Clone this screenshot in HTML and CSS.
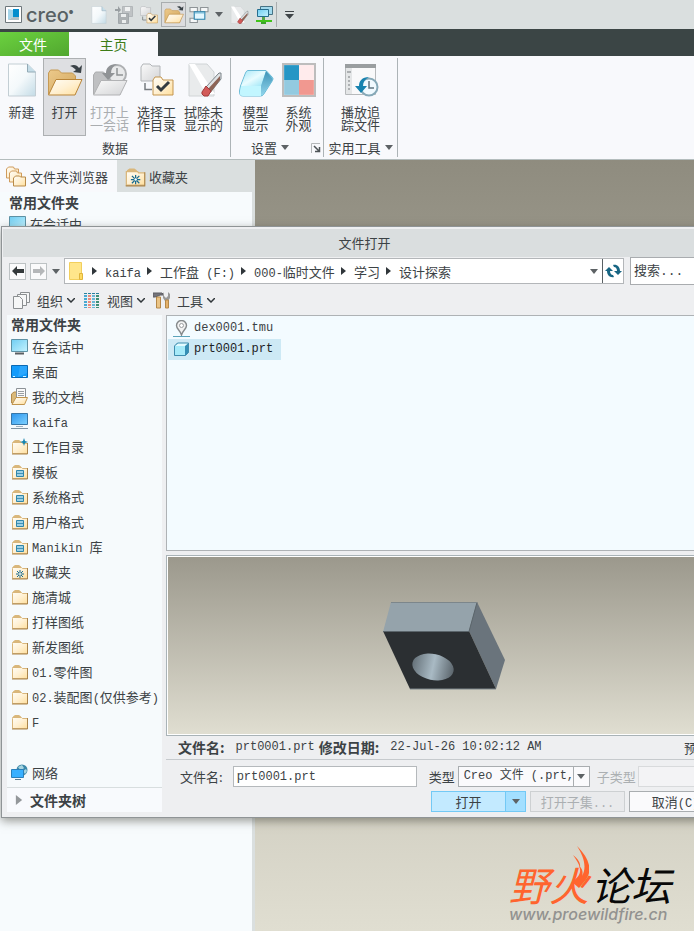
FILE: index.html
```html
<!DOCTYPE html>
<html lang="zh-CN">
<head>
<meta charset="utf-8">
<title>Creo</title>
<link rel="stylesheet" href="styles.css">
</head>
<body>
<svg class="sprite" aria-hidden="true">
  <defs>
    <linearGradient id="g-paper" x1="0" y1="0" x2="1" y2="1"><stop offset="0" stop-color="#fff"/><stop offset=".5" stop-color="#f4f9fb"/><stop offset="1" stop-color="#c3dbe6"/></linearGradient>
    <linearGradient id="g-folder" x1="0" y1="0" x2="1" y2="1"><stop offset="0" stop-color="#fffdf6"/><stop offset=".5" stop-color="#fff0d2"/><stop offset="1" stop-color="#ffdf9c"/></linearGradient>
    <linearGradient id="g-back" x1="0" y1="0" x2="1" y2="1"><stop offset="0" stop-color="#ecc98a"/><stop offset="1" stop-color="#d3a860"/></linearGradient>
    <linearGradient id="g-grey" x1="0" y1="0" x2="1" y2="1"><stop offset="0" stop-color="#fafafa"/><stop offset="1" stop-color="#d3d4d6"/></linearGradient>
    <linearGradient id="g-sky" x1="0" y1="0" x2="1" y2="1"><stop offset="0" stop-color="#6fcdf2"/><stop offset="1" stop-color="#c4f3ff"/></linearGradient>
    <linearGradient id="g-blue" x1="0" y1="0" x2="1" y2="1"><stop offset="0" stop-color="#2b95ee"/><stop offset="1" stop-color="#7fd2ff"/></linearGradient>
    <linearGradient id="g-ice" x1="0" y1="0" x2="1" y2="1"><stop offset="0" stop-color="#a5e6f7"/><stop offset=".5" stop-color="#e9fcff"/><stop offset="1" stop-color="#94e3f6"/></linearGradient>
    <linearGradient id="g-side" x1="0" y1="0" x2="0" y2="1"><stop offset="0" stop-color="#3f94b8"/><stop offset="1" stop-color="#8fd3ea"/></linearGradient>
    <linearGradient id="g-hole" x1="0" y1="0" x2="1" y2="0"><stop offset="0" stop-color="#66727a"/><stop offset=".5" stop-color="#a9bac4"/><stop offset="1" stop-color="#5c666d"/></linearGradient>
  </defs>
  <symbol id="i-doc" viewBox="0 0 28 34"><path d="M.5 1h19l8 8v24H.5z" fill="url(#g-paper)" stroke="#c3ced4"/><path d="M19.500 1v8h8" fill="#c5dde8" stroke="#93aab6"/></symbol>
  <symbol id="i-open" viewBox="0 0 36 34"><path d="M1.500 31V10l2-3h8l3 3h11l3 3v18z" fill="url(#g-back)" stroke="#c69a55"/><path d="M9 16.500h26L28 32H1.500z" fill="url(#g-folder)" stroke="#b98539"/><path d="M23 3c4-2 7-1 9 2l3-3-1 8-8-1 3-2c-2-2-3-3-6-4z" fill="#3a4247"/></symbol>
  <symbol id="i-last" viewBox="0 0 36 34"><path d="M1.500 31V12l2-3h8l3 3h11l3 3v16z" fill="#bfc0c2" stroke="#acadaf"/><circle cx="25" cy="11" r="9" fill="#e8e9ea" stroke="#aeb0b2" stroke-width="2"/><path d="M25 5v7h6" fill="none" stroke="#8f9294" stroke-width="1.500"/><path d="M25 1c-8 0-11 4-11 9h-4l6 7 7-7h-4c0-4 2-7 6-9z" fill="#909396"/><path d="M9 17.500h26L28 32H1.500z" fill="url(#g-grey)" stroke="#b1b2b4"/></symbol>
  <symbol id="i-selectdir" viewBox="0 0 34 34"><path d="M1 4l2-3h7l2 2h8v15H1z" fill="url(#g-grey)" stroke="#b2b5b8"/><path d="M5 20v6.500h7" fill="none" stroke="#777c80" stroke-width="1.500"/><path d="M13 32V17l2-3h6l2 3h10v15z" fill="url(#g-folder)" stroke="#c3954f"/><path d="M17 23l4 4 8-8" fill="none" stroke="#333b40" stroke-width="3"/></symbol>
  <symbol id="i-erase" viewBox="0 0 34 34"><path d="M2 1h18l7 8v24H2z" fill="#e9ebec" stroke="#d0d4d6"/><path d="M2 1l17 30h9L8 1z" fill="#fff"/><path d="M19 24L32 10l2 0v6L22 31z" fill="#dfe3e5" stroke="#7b8388"/><path d="M21 26l12-13v4L24 29z" fill="#8d6456"/><path d="M15 29l4-6 5 5-3 5h-4q-3-2-2-4z" fill="#d25a58" stroke="#a03b3b"/></symbol>
  <symbol id="i-model" viewBox="0 0 36 34"><path d="M10 7.500h18l6.500 7q1 1 0 3l-9 14q-1 1.500-3 1.500H5q-4 0-3.500-5l1-5 5-13q1-2.500 2.500-2.500z" fill="#8fdcf1" stroke="#69b9d5"/><path d="M10 8h18L23 23H3L8 10q1-2 2-2z" fill="url(#g-ice)"/><path d="M3 23h20v10H5q-4 0-3-5z" fill="#c2f6ff"/><path d="M28 8l6 7q1 1 0 3l-9 13-2 1v-9z" fill="url(#g-side)"/></symbol>
  <symbol id="i-appearance" viewBox="0 0 32 32"><path d="M1 1h30v30H1z" fill="#fff" stroke="#bdbdbd" stroke-width="2"/><path d="M2 2h14v14H2z" fill="#2596c5"/><path d="M16 2h14v14H16z" fill="#ffebec"/><path d="M2 16h14v14H2z" fill="#93cae0"/><path d="M16 16h14v14H16z" fill="#f19890"/></symbol>
  <symbol id="i-trail" viewBox="0 0 34 34"><path d="M1.500 1.500h30v30h-30z" fill="#f9f9fa" stroke="#b7babc"/><path d="M1 1h31v4H1z" fill="#9a9ea0"/><path d="M2 5h6v26H2z" fill="#e4e6e7"/><path d="M3 9h4M4 14h2M4 18h2M4 22h2M4 26h2" stroke="#777b7e"/><circle cx="25" cy="24" r="8.500" fill="#f1faff" stroke="#86a9b8" stroke-width="2"/><path d="M25 18v7h5" fill="none" stroke="#607681" stroke-width="1.500"/><path d="M25 14c-7 0-10 4-10 9h-4l6 7 6-7h-4c0-4 2-7 6-9z" fill="#1883af"/></symbol>
  <symbol id="i-folder" viewBox="0 0 17 17"><path d="M2 5V3.500L4 2h4l2 1.500V5z" fill="#d9b77b"/><path d="M1.500 5.500V4.500h9l1 1h5v10h-15z" fill="url(#g-folder)" stroke="#d9b67a"/><path d="M1 16h15.500V5" fill="none" stroke="#a9834a"/></symbol>
  <symbol id="i-folders" viewBox="0 0 21 21"><path d="M1 3l2-2h5l1 2h4v9H1z" fill="url(#g-folder)" stroke="#cf9b5c"/><path d="M4 7l2-2h5l1 2h4v9H4z" fill="url(#g-folder)" stroke="#cf9b5c"/><path d="M8 12l2-2h4l1 1h5v9H8z" fill="url(#g-folder)" stroke="#b98b48"/></symbol>
  <symbol id="i-star" viewBox="0 0 8 8"><path d="M4 0v8M0 4h8M1 1l6 6M7 1L1 7" stroke="#176b90"/><circle cx="4" cy="4" r="1" fill="#fff"/></symbol>
  <symbol id="i-template" viewBox="0 0 17 17"><use href="#i-folder"/><path d="M5.500 7.500h7v6h-7z" fill="#9ccfe4" stroke="#2f86ab"/><path d="M6 10.500h6" stroke="#4394b8"/></symbol>
  <symbol id="i-fav" viewBox="0 0 17 17"><use href="#i-folder"/><use href="#i-star" x="5" y="7" width="8" height="8"/></symbol>
  <symbol id="i-session" viewBox="0 0 17 17"><path d="M.5 1.500h16v12H.5z" fill="url(#g-sky)" stroke="#5e92a5"/><path d="M4 15.500h9" stroke="#5a5f62" stroke-width="2"/></symbol>
  <symbol id="i-desktop" viewBox="0 0 17 17"><path d="M.5 2.500h16v12H.5z" fill="#129bfb" stroke="#0a69b3"/><path d="M9 3h7v7l-9 4z" fill="#43b4ff" opacity=".5"/><path d="M2 13.500h2m8 0h3" stroke="#d9f6ff"/></symbol>
  <symbol id="i-docs" viewBox="0 0 17 17"><path d="M.5 15V6L3 4h3l1 2h5v9z" fill="#dab979" stroke="#b28b4d"/><path d="M5.500.5h9v10h-9z" fill="#fafafa" stroke="#8c9297"/><path d="M7 3.500h6M7 5.500h6M7 7.500h6" stroke="#9a9fa3"/><path d="M5 9.500h11.500l-3 7H1z" fill="url(#g-folder)" stroke="#c0954f"/></symbol>
  <symbol id="i-pc" viewBox="0 0 17 17"><path d="M.5.500h16v11H.5z" fill="url(#g-blue)" stroke="#3877a8"/><path d="M5 13.500h7" stroke="#9fb1be"/><path d="M0 15.500h17" stroke="#7f93a3"/></symbol>
  <symbol id="i-work" viewBox="0 0 17 17"><use href="#i-folder"/><path d="M13 0l1 3 3 1-3 1-1 3-1-3-3-1 3-1z" fill="#1684ae"/></symbol>
  <symbol id="i-net" viewBox="0 0 17 17"><circle cx="11" cy="6" r="5.500" fill="#3c88a9"/><path d="M7 3l4-2 2 3-3 3zM12 7l3-2 1 2-2 3z" fill="#a7d4df"/><path d="M.5 5.500h12v8H.5z" fill="#38b0ff" stroke="#2a80ba"/><path d="M4 15.500h6" stroke="#5a7d92"/></symbol>
  <symbol id="i-pages" viewBox="0 0 18 17"><g fill="#f6f7f7" stroke="#8b8f91"><path d="M7.500.500h9v10h-9z"/><path d="M4.500 2.500h9v11h-9z"/><path d="M.5 4.500h6l3 3v9h-9z"/></g></symbol>
  <symbol id="i-grid" viewBox="0 0 18 17"><path d="M1 1.500h3M5 1.500h3M9 1.500h3M13 1.500h3" stroke="#27809c"/><g stroke-width="3" stroke-dasharray="2 1"><path d="M2.500 3v13" stroke="#49a9d2"/><path d="M6.500 3v13" stroke="#e98b7b"/><path d="M10.500 3v13" stroke="#6bb6d6"/><path d="M14.500 3v13" stroke="#3e8f75"/></g></symbol>
  <symbol id="i-tools" viewBox="0 0 18 17"><path d="M0 5V1h9l2 2H7L5 4 2 5z" fill="#74747b" stroke="#5c5c62"/><path d="M3.500 5h4v11h-4z" fill="#ebc485" stroke="#b58848"/><path d="M11 0v4l2 2 2-2V0l2 2v4l-2 3h-3l-2-3V2z" fill="#999"/><path d="M12.500 8h3v8h-3z" fill="#e4b16a" stroke="#b58848"/></symbol>
  <symbol id="i-down" viewBox="0 0 8 5"><path d="M0 0h8L4 5z" fill="#5d6265"/></symbol>
  <symbol id="i-right" viewBox="0 0 5 8"><path d="M0 0l5 4-5 4z" fill="#30363a"/></symbol>
  <symbol id="i-chev" viewBox="0 0 8 5"><path d="M0 0l4 4 4-4" fill="none" stroke="#30363a" stroke-width="1.500"/></symbol>
  <symbol id="i-back" viewBox="0 0 12 10"><path d="M0 5l5-5v3h7v4H5v3z" fill="currentColor"/></symbol>
  <symbol id="i-yellow" viewBox="0 0 14 18"><path d="M.5.500h12v17H.5z" fill="#ffe68b" stroke="#f2cf5c"/><path d="M10.500 11.500h3v6h-3z" fill="#ffdb61" stroke="#e0b53c"/></symbol>
  <symbol id="i-refresh" viewBox="0 0 17 14"><path d="M4 3L0 7h2c0 4 3 7 7 6l-1-2c-2 0-3-2-3-4h3zM13 11l4-4h-2c0-4-3-7-7-6l1 2c2 0 3 2 3 4H9z" fill="#176583"/></symbol>
  <symbol id="i-pin" viewBox="0 0 17 17"><path d="M8.500 15C7 10 3.500 9 3.500 5.500a5 5 0 0 1 10 0c0 3.500-3.500 4.500-5 9.500z" fill="#f1f1f1" stroke="#85898b" stroke-width="1.400"/><circle cx="8.500" cy="5.500" r="2" fill="#fff" stroke="#9b9fa1"/><path d="M0 16.500h17" stroke="#5ba3ba"/></symbol>
  <symbol id="i-part" viewBox="0 0 17 17"><path d="M1.500 5l3-3h11v9.500l-3 3h-11z" fill="#348eb5" stroke="#3f8dae"/><path d="M2 5l3-2.500h10L12 5z" fill="#e3fbff"/><path d="M2 5h10v9H2z" fill="#a6eaf9"/></symbol>
  <symbol id="i-creo" viewBox="0 0 17 17"><path d="M.5.500h16v16H.5z" fill="#fff" stroke="#6d777b"/><path d="M3 3l5 1v7l-5 3z" fill="#a5d5e9"/><path d="M8 3h6v8H8z" fill="#048dcd"/><path d="M3 14l5-3h6v3z" fill="#b1bfc5"/></symbol>
  <symbol id="i-save" viewBox="0 0 18 18"><path d="M7.500.500h10v10h-10z" fill="#bfc3c5" stroke="#b2b7b9"/><path d="M10 1h5v4h-5z" fill="#f0f2f2"/><path d="M3.500 7.500h10v10h-10z" fill="#acb1b3" stroke="#a1a7aa"/><path d="M6 8h5v3H6zM7 14h4v3H7z" fill="#ebeeee"/><path d="M0 3h3V0l3 4-3 3V5H0z" fill="#999fa2"/></symbol>
  <symbol id="i-windows" viewBox="0 0 18 17"><path d="M.5 1.500h7v4h-7zM10.500 1.500h7v4h-7zM.5 11.500h7v4h-7z" fill="#f5f7f7" stroke="#8e9497"/><path d="M4.500 5.500h10v7h-10z" fill="#e3f7ff" stroke="#2580ac"/><path d="M5 6.500h9" stroke="#62aece"/></symbol>
  <symbol id="i-monitor" viewBox="0 0 18 18"><path d="M5.500.500h12v8h-12z" fill="#a1d9ed" stroke="#477385"/><path d="M2.500 3.500h11v7h-11z" fill="url(#g-sky)" stroke="#256d8e"/><path d="M7 11h3v4H7z" fill="#58a64b"/><path d="M1 15h16" stroke="#41c31b" stroke-width="2"/><path d="M6 17h5" stroke="#3aa52a" stroke-width="2"/></symbol>
  <symbol id="i-launch" viewBox="0 0 10 10"><path d="M.5 10V.500H9" fill="none" stroke="#b5b8ba"/><path d="M3 3l5 5M8.500 4v4.500H4" fill="none" stroke="#4e5457" stroke-width="1.500"/></symbol>
  <symbol id="i-more" viewBox="0 0 9 8"><path d="M0 .500h9M0 3h9L4.500 8z" fill="#3f4548" stroke="none"/><path d="M0 .500h9" stroke="#3f4548"/></symbol>
</svg>

<div class="app">
  <header class="titlebar">
    <svg class="logo"><use href="#i-creo"/></svg><span class="brand">creo<sup>●</sup></span>
    <nav class="quick" aria-label="快速访问">
      <button aria-label="新建"><svg><use href="#i-doc"/></svg></button>
      <button aria-label="保存"><svg><use href="#i-save"/></svg></button>
      <button aria-label="选择工作目录"><svg><use href="#i-selectdir"/></svg></button>
      <button aria-label="打开" class="on"><svg><use href="#i-open"/></svg></button>
      <button aria-label="窗口"><svg><use href="#i-windows"/></svg></button>
      <button aria-label="窗口列表" class="thin"><svg class="down"><use href="#i-down"/></svg></button>
      <button aria-label="拭除"><svg><use href="#i-erase"/></svg></button>
      <button aria-label="显示"><svg><use href="#i-monitor"/></svg></button>
      <button aria-label="自定义" class="more"><svg><use href="#i-more"/></svg></button>
    </nav>
  </header>

  <nav class="tabs"><button class="file-tab">文件</button><button class="home-tab">主页</button></nav>

  <section class="ribbon">
    <div class="group">
      <div class="tools">
        <button class="tool"><svg><use href="#i-doc"/></svg>新建</button>
        <button class="tool active"><svg><use href="#i-open"/></svg>打开</button>
        <button class="tool" disabled><svg><use href="#i-last"/></svg>打开上<br>一会话</button>
        <button class="tool"><svg><use href="#i-selectdir"/></svg>选择工<br>作目录</button>
        <button class="tool"><svg><use href="#i-erase"/></svg>拭除未<br>显示的</button>
      </div>
      <div class="caption">数据</div>
    </div>
    <div class="group">
      <div class="tools">
        <button class="tool"><svg><use href="#i-model"/></svg>模型<br>显示</button>
        <button class="tool"><svg><use href="#i-appearance"/></svg>系统<br>外观</button>
      </div>
      <div class="caption with-launch"><button>设置<svg class="down"><use href="#i-down"/></svg></button><button class="launch" aria-label="设置对话框"><svg><use href="#i-launch"/></svg></button></div>
    </div>
    <div class="group">
      <div class="tools"><button class="tool"><svg><use href="#i-trail"/></svg>播放追<br>踪文件</button></div>
      <div class="caption"><button>实用工具<svg class="down"><use href="#i-down"/></svg></button></div>
    </div>
  </section>

  <main class="work">
    <aside class="browser">
      <div class="browser-tabs">
        <button class="current"><svg><use href="#i-folders"/></svg>文件夹浏览器</button>
        <button class="fav"><svg><use href="#i-fav"/></svg>收藏夹</button>
      </div>
      <h2>常用文件夹</h2>
      <a class="place" href="#"><svg><use href="#i-session"/></svg><span>在会话中</span></a>
    </aside>
    <div class="canvas">
      <div class="watermark">
        <div class="mark"><span class="fire">野火<svg class="flame" viewBox="0 0 17 42"><path d="M5 0c13 13 16 25 8 35L7 42 0 36c7-5 10-10 7-16 4 3 4 7 3 10 5-9 2-19-5-30z" fill="#ff642e"/><path d="M1 9c5 4 8 8 7 13-1-4-4-9-7-13z" fill="#ff642e"/></svg></span><span>论坛</span></div>
        <div class="url">www.proewildfire.cn</div>
      </div>
    </div>
  </main>

  <section class="dialog" role="dialog" aria-labelledby="dlg-title">
    <h1 id="dlg-title">文件打开</h1>
    <div class="nav">
      <button class="step" aria-label="后退"><svg><use href="#i-back"/></svg></button>
      <button class="step off" aria-label="前进"><svg class="flip"><use href="#i-back"/></svg></button>
      <button class="hist" aria-label="历史"><svg class="down"><use href="#i-down"/></svg></button>
      <div class="path">
        <svg class="yellow"><use href="#i-yellow"/></svg>
        <svg class="right"><use href="#i-right"/></svg><a href="#"><span class="lat">kaifa</span></a>
        <svg class="right"><use href="#i-right"/></svg><a href="#">工作盘<span class="lat"> (F:)</span></a>
        <svg class="right"><use href="#i-right"/></svg><a href="#"><span class="lat">000-</span>临时文件</a>
        <svg class="right"><use href="#i-right"/></svg><a href="#">学习</a>
        <svg class="right"><use href="#i-right"/></svg><a href="#">设计探索</a>
        <button class="path-drop" aria-label="路径列表"><svg class="down"><use href="#i-down"/></svg></button>
        <button class="refresh" aria-label="刷新"><svg><use href="#i-refresh"/></svg></button>
      </div>
      <input class="search" type="text" aria-label="搜索" placeholder="搜索...">
    </div>
    <div class="toolbar">
      <button><svg class="ti"><use href="#i-pages"/></svg>组织<svg class="down"><use href="#i-chev"/></svg></button>
      <button><svg class="ti"><use href="#i-grid"/></svg>视图<svg class="down"><use href="#i-chev"/></svg></button>
      <button><svg class="ti"><use href="#i-tools"/></svg>工具<svg class="down"><use href="#i-chev"/></svg></button>
    </div>
    <div class="columns">
      <aside class="places">
        <h2>常用文件夹</h2>
        <a class="place" href="#"><svg><use href="#i-session"/></svg><span>在会话中</span></a>
        <a class="place" href="#"><svg><use href="#i-desktop"/></svg><span>桌面</span></a>
        <a class="place" href="#"><svg><use href="#i-docs"/></svg><span>我的文档</span></a>
        <a class="place" href="#"><svg><use href="#i-pc"/></svg><span><span class="lat">kaifa</span></span></a>
        <a class="place" href="#"><svg><use href="#i-work"/></svg><span>工作目录</span></a>
        <a class="place" href="#"><svg><use href="#i-template"/></svg><span>模板</span></a>
        <a class="place" href="#"><svg><use href="#i-template"/></svg><span>系统格式</span></a>
        <a class="place" href="#"><svg><use href="#i-template"/></svg><span>用户格式</span></a>
        <a class="place" href="#"><svg><use href="#i-template"/></svg><span><span class="lat">Manikin </span>库</span></a>
        <a class="place" href="#"><svg><use href="#i-fav"/></svg><span>收藏夹</span></a>
        <a class="place" href="#"><svg><use href="#i-folder"/></svg><span>施清城</span></a>
        <a class="place" href="#"><svg><use href="#i-folder"/></svg><span>打样图纸</span></a>
        <a class="place" href="#"><svg><use href="#i-folder"/></svg><span>新发图纸</span></a>
        <a class="place" href="#"><svg><use href="#i-folder"/></svg><span><span class="lat">01.</span>零件图</span></a>
        <a class="place" href="#"><svg><use href="#i-folder"/></svg><span><span class="lat">02.</span>装配图<span class="lat">(</span>仅供参考<span class="lat">)</span></span></a>
        <a class="place" href="#"><svg><use href="#i-folder"/></svg><span><span class="lat">F</span></span></a>
        <a class="place network" href="#"><svg><use href="#i-net"/></svg><span>网络</span></a>
        <button class="tree"><svg><use href="#i-right"/></svg>文件夹树</button>
      </aside>
      <div class="content">
        <div class="files">
          <button class="file"><svg><use href="#i-pin"/></svg>dex0001.tmu</button>
          <button class="file selected"><svg><use href="#i-part"/></svg>prt0001.prt</button>
        </div>
        <div class="preview">
          <svg class="solid" viewBox="0 0 122 88" role="img" aria-label="prt0001"><path d="M8 0h86l-8 30H0z" fill="#95a3ab"/><path d="M94 0l28 58-9 29-27-58z" fill="#6a747c"/><path d="M0 29h86l27 58H27z" fill="#2b2f32"/><path d="M0 29.500h86l8-29" fill="none" stroke="#5b656b"/><path d="M8 .500h86M27 87h86" stroke="#7c868b"/><ellipse cx="50" cy="65" rx="21" ry="13" fill="url(#g-hole)" transform="rotate(12 50 65)"/></svg>
        </div>
        <div class="info"><b>文件名:</b><span class="value">prt0001.prt</span><b>修改日期:</b><span class="value">22-Jul-26 10:02:12 AM</span><button class="prev">预览</button></div>
        <form class="form">
          <div class="row">
            <label for="fname">文件名:</label><input id="fname" type="text" value="prt0001.prt">
            <label for="ftype">类型</label>
            <span class="select"><select id="ftype"><option>Creo 文件 (.prt, .asm)</option></select><span class="cap"><svg class="down"><use href="#i-down"/></svg></span></span>
            <label class="dim" for="fsub">子类型</label><select id="fsub" class="sub" disabled><option></option></select>
          </div>
          <div class="row actions">
            <div class="split"><button type="button">打开</button><button type="button" class="arrow" aria-label="打开选项"><svg class="down"><use href="#i-down"/></svg></button></div>
            <button type="button" class="subset" disabled>打开子集<span class="lat">...</span></button>
            <button type="button" class="cancel">取消<span class="lat">(C)</span></button>
          </div>
        </form>
      </div>
    </div>
  </section>
</div>
</body>
</html>
```
FILE: styles.css
```css
* { box-sizing: border-box; }

html, body { margin: 0; }

body {
  font: 13px/13px "Noto Sans CJK SC", sans-serif;
  color: #3c4245;
  overflow: hidden;
}

button {
  font: inherit;
  color: inherit;
  border: 0;
  padding: 0;
  background: none;
}

a { color: inherit; text-decoration: none; }
svg { display: block; flex: none; }
h1, h2 { margin: 0; font-weight: normal; }
h2, b { font-size: 14px; font-weight: bold; }

.sprite { position: absolute; width: 0; height: 0; }

/* Latin runs sit on the baseline of the Chinese text without growing its line */
.lat { font: 12px/0 "Liberation Mono", monospace; white-space: pre; }
.down { width: 8px; height: 5px; }

.app {
  position: relative;
  min-height: 100vh;
  display: flex;
  flex-direction: column;
  overflow: hidden;
}

/* Title bar */
.titlebar {
  display: flex;
  align-items: center;
  height: 29px;
  padding-left: 5px;
  background: #dadfdf;
}
.logo { width: 17px; height: 17px; }
.brand {
  width: 64px;
  padding-left: 4px;
  font: 500 20px/24px Inter, sans-serif;
  color: #586164;
}
.brand sup { font-size: 5px; line-height: 5px; vertical-align: 8px; }
.quick { display: flex; align-items: center; }
.quick button {
  display: grid;
  place-items: center;
  width: 25px;
  height: 25px;
}
.quick svg { width: 20px; height: 18px; }
.quick .down { width: 8px; height: 5px; }
.quick .on { border: 1px solid #a9adaf; background: #dcdddf; }
.quick .on svg { width: 20px; height: 19px; }
.quick .thin { width: 15px; }
.quick .more { border-left: 1px solid #a9adaf; }
.quick .more svg { width: 9px; height: 8px; }

/* Ribbon tabs */
.tabs {
  display: flex;
  height: 27px;
  padding-top: 3px;
  background: #3b4545;
  font-size: 14px;
}
.file-tab { width: 69px; padding-right: 3px; color: #fff; background: linear-gradient(160deg, #6bd13f, #51a72f); }
.home-tab { width: 89px; color: #3d7c17; background: #f8f9fc; }

/* Ribbon */
.ribbon {
  display: flex;
  height: 104px;
  padding-top: 2px;
  background: #f8f9fc;
  border-bottom: 1px solid #b4bdbd;
}
.group {
  display: flex;
  flex-direction: column;
  height: 99px;
  border-right: 1px solid #adb4b7;
}
.group:nth-child(1) { width: 231px; }
.group:nth-child(2) { width: 93px; }
.group:nth-child(3) { width: 74px; }
.tools { display: flex; justify-content: center; }
.group:first-child .tools { justify-content: flex-start; }
.tool {
  display: flex;
  flex-direction: column;
  align-items: center;
  width: 43px;
  height: 78px;
  padding-top: 5px;
}
.group:first-child .tool { width: 47px; }
.group:first-child .tool:first-child,
.group:first-child .tool.active { width: 43px; }
.tool svg { width: 36px; height: 34px; margin-bottom: 8px; }
.tool:disabled { color: #aaadb0; }
.tool.active {
  padding-top: 4px;
  border: 1px solid #adb0b2;
  background: #dedfe2;
}
.caption { padding-top: 5px; text-align: center; }
.caption button { display: inline-flex; align-items: center; gap: 4px; }
.with-launch {
  display: grid;
  grid-template-columns: 1fr 14px;
  justify-items: center;
  align-items: center;
}
.launch svg { width: 10px; height: 10px; }

/* Workspace */
.work { flex: 1; display: flex; }
.browser {
  width: 255px;
  background: #f7fbfd;
  border-right: 3px solid #dadfdf;
}
.browser-tabs { display: flex; height: 32px; margin-bottom: 3px; }
.browser-tabs button { display: flex; align-items: center; text-align: left; }
.browser-tabs .current { width: 117px; padding-left: 5px; gap: 3px; background: #f8f9fc; }
.browser-tabs .fav { flex: 1; padding-left: 7px; gap: 3px; background: #dadfdf; }
.browser-tabs svg { width: 22px; height: 21px; }
.browser h2 { padding: 0 9px; line-height: 14px; margin-bottom: 2px; }
.browser .place { padding-left: 9px; }

.canvas {
  flex: 1;
  display: flex;
  align-items: flex-end;
  justify-content: flex-end;
  padding: 0 20px 8px 0;
  background: linear-gradient(#8f8c7f, #e0ded1);
}
.watermark { width: 165px; }
.mark {
  display: flex;
  gap: 2px;
  font-size: 40px;
  line-height: 42px;
  font-weight: 400;
  font-style: italic;
  color: #080808;
}
.fire { position: relative; color: #ff642e; }
.flame { position: absolute; width: 17px; height: 42px; right: 0; top: -17px; }
.url { font: italic 500 16px/18px Inter, sans-serif; color: #929290; }

/* File dialog */
.dialog {
  position: absolute;
  top: 226px;
  left: 1px;
  right: -34px;
  padding: 2px 5px 5px;
  border: 1px solid #8f9496;
  background: #eeeff1;
  box-shadow: 0 3px 9px rgba(60, 60, 50, .5);
}
.dialog h1 {
  margin: 0 -4px;
  font-size: 13px;
  line-height: 28px;
  text-align: center;
  background: #dadedf;
}
.nav { display: flex; align-items: center; height: 28px; padding-left: 2px; }
.step {
  display: grid;
  place-items: center;
  width: 17px;
  height: 17px;
  margin-right: 4px;
  border: 1px solid #bdc2c4;
  background: #fafafb;
  color: #34393b;
}
.step svg { width: 12px; height: 10px; }
.step.off { color: #b5b7b9; }
.flip { transform: scaleX(-1); }
.hist { padding: 6px 4px 6px 1px; }
.path {
  flex: 1;
  display: flex;
  align-items: center;
  height: 26px;
  padding-left: 4px;
  border: 1px solid #b3b6b9;
  background: #fff;
}
.path a { margin-right: 6px; white-space: nowrap; }
.right { width: 5px; height: 8px; margin-right: 8px; }
.yellow { width: 14px; height: 18px; margin-right: 9px; }
.path-drop { margin-left: auto; padding: 6px 4px; }
.refresh {
  display: grid;
  place-items: center;
  width: 21px;
  height: 24px;
  border-left: 1px solid #596064;
}
.refresh svg { width: 17px; height: 14px; }
.search {
  width: 92px;
  height: 28px;
  margin-left: 6px;
  padding: 0 3px;
  border: 1px solid #a9acaf;
  font: 13px "Liberation Mono", "Noto Sans CJK SC", monospace;
  background: #fff;
}
.search::placeholder { color: #3c4245; opacity: 1; }

.toolbar { display: flex; gap: 8px; height: 30px; padding-left: 6px; }
.toolbar button { display: flex; align-items: center; }
.ti { width: 18px; height: 17px; margin-right: 6px; }
.toolbar .down { margin-left: 4px; }

.columns { display: flex; gap: 4px; }
.places {
  display: flex;
  flex-direction: column;
  width: 155px;
  background: #f6fafc;
}
.places h2 { padding: 2px 4px; line-height: 15px; }
.place {
  display: flex;
  align-items: center;
  height: 25px;
  padding-left: 4px;
  white-space: nowrap;
}
.place svg { width: 17px; height: 17px; margin-right: 4px; }
.network { margin-top: 26px; margin-bottom: 2px; }
.tree {
  display: flex;
  align-items: center;
  flex: 1;
  padding-left: 8px;
  border-top: 1px solid #d8dedf;
  background: #f8fafd;
  font-size: 14px;
  font-weight: bold;
}
.tree svg { width: 8px; height: 10px; margin-right: 7px; opacity: .5; }

.content { flex: 1; min-width: 0; }
.files {
  height: 236px;
  padding: 2px 1px;
  border: 1px solid #aeb2b5;
  background: #f3fbff;
}
.file {
  display: flex;
  align-items: center;
  width: 113px;
  height: 21px;
  padding-left: 5px;
  font: 12px/13px "Liberation Mono", monospace;
}
.file svg { width: 17px; height: 17px; margin-right: 4px; }
.file.selected { background: #cde9f5; color: #1c2225; }
.preview {
  display: grid;
  place-items: center;
  height: 181px;
  margin-top: 4px;
  border: 1px solid #a9b3b7;
  outline: 1px solid #fff;
  outline-offset: -2px;
  background: linear-gradient(#9b988c, #e0ded1);
}
.solid { width: 122px; height: 88px; }
.info {
  display: flex;
  align-items: center;
  height: 24px;
  padding-left: 12px;
  border-bottom: 1px solid #c6cacd;
  white-space: nowrap;
}
.value { margin: 0 4px 0 11px; font: 12px/13px "Liberation Mono", monospace; }
.prev { margin-left: auto; margin-right: 12px; }

.form { padding: 6px 0 0 14px; }
.row { display: flex; align-items: center; height: 21px; }
.row input {
  width: 184px;
  height: 21px;
  margin: 0 12px 0 10px;
  padding: 0 3px;
  border: 1px solid #b5b9bc;
  background: #fff;
  color: #3c4245;
  font: 12px/13px "Liberation Mono", monospace;
}
.select {
  display: flex;
  width: 132px;
  height: 21px;
  margin: 0 7px 0 3px;
  border: 1px solid #a9adb0;
  background: #fafafc;
}
select {
  appearance: none;
  border: 0;
  border-radius: 0;
  background: none;
  color: #3c4245;
  font: 12px/19px "Liberation Mono", "Noto Sans CJK SC", monospace;
}
.select select { flex: 1; min-width: 0; padding: 0 0 0 5px; }
.cap {
  display: grid;
  place-items: center;
  width: 16px;
  border-left: 1px solid #a9adb0;
  pointer-events: none;
}
.dim { color: #abafb2; white-space: nowrap; }
.sub { flex: 1; min-width: 0; height: 21px; margin-left: 2px; border: 1px solid #cfd2d4; background: #f6f6f8; }

.actions { justify-content: flex-end; gap: 4px; margin-top: 4px; }
.split { display: flex; width: 95px; height: 21px; border: 1px solid #73c9f5; background: #c3eaff; }
.split button { flex: 1; }
.split .arrow {
  display: grid;
  place-items: center;
  flex: none;
  width: 20px;
  border-left: 1px solid #73c9f5;
  background: #a3dfff;
}
.subset { width: 95px; height: 21px; border: 1px solid #cdd0d2; color: #abafb2; background: #e9eaec; }
.cancel { width: 93px; height: 21px; border: 1px solid #a9adb0; background: #fafafc; }
```
